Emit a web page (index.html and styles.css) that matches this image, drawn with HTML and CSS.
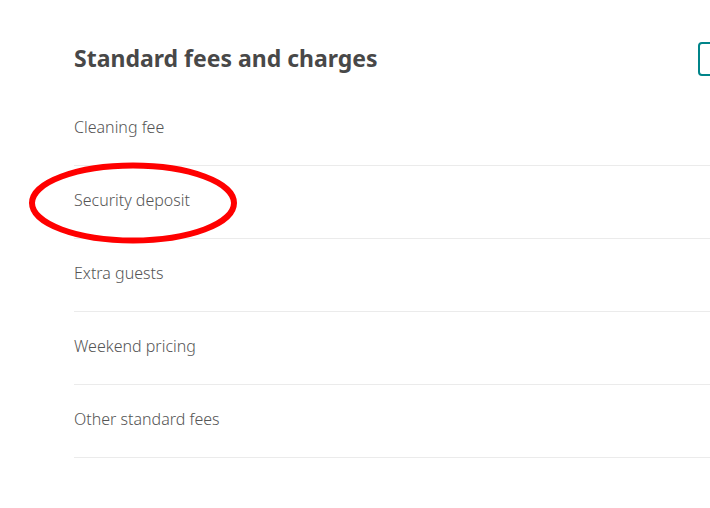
FILE: index.html
```html
<!DOCTYPE html>
<html lang="en">
<head>
    <meta charset="UTF-8">
    <title>Standard fees and charges</title>
    <link rel="stylesheet" href="styles.css">
</head>
<body>
    <div class="page">
        <div class="header">
            <h1>Standard fees and charges</h1>
            <button class="edit-btn" aria-label="Edit"></button>
        </div>

        <div class="fee-row">Cleaning fee</div>
        <div class="fee-row">Security deposit</div>
        <div class="fee-row">Extra guests</div>
        <div class="fee-row">Weekend pricing</div>
        <div class="fee-row">Other standard fees</div>
    </div>

    <!-- red annotation circled around one row -->
    <svg class="mark" width="220" height="90" viewBox="0 0 220 90">
        <ellipse cx="107" cy="44" rx="101" ry="37.5" fill="none" stroke="#ff0000" stroke-width="6"/>
    </svg>
</body>
</html>
```

FILE: styles.css
```css
body {
    margin: 0;
    font-family: "Noto Sans", sans-serif;
    color: #484848;
    background: #fff;
    overflow: hidden;
}
.page {
    width: 700px;
    padding: 42px 0 0 74px;
}
.header {
    display: flex;
    align-items: center;
    height: 34px;
    margin-bottom: 17px;
}
.header h1 {
    flex: 1;
    margin: 0 0 2px;
    font-size: 23px;
    font-weight: 700;
    color: #484848;
}
.edit-btn {
    width: 76px;
    height: 34px;
    background: #fff;
    border: 2px solid #008489;
    border-radius: 4px;
}
.fee-row {
    height: 68px;
    padding-bottom: 4px;
    display: flex;
    align-items: center;
    font-size: 16px;
    font-weight: 300;
    color: #555;
    border-bottom: 1px solid #ebebeb;
}
.mark {
    position: absolute;
    left: 26px;
    top: 159px;
}
```
